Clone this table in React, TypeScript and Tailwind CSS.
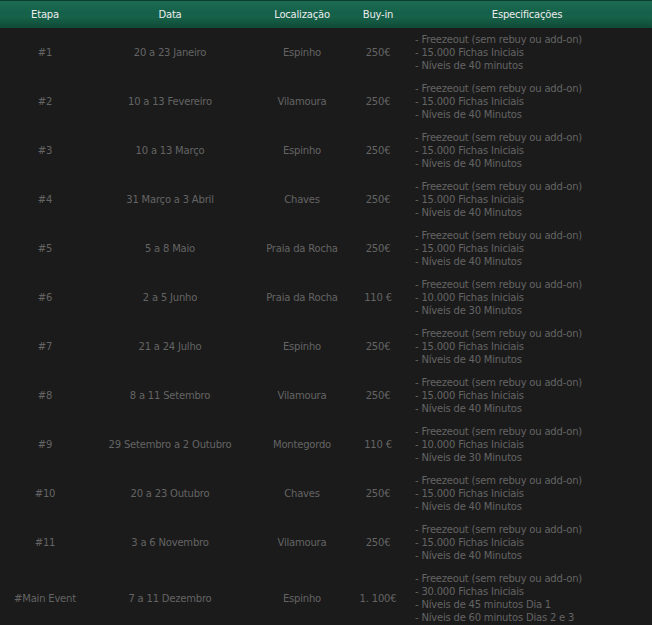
const ROWS = [
  { etapa: '#1', data: '20 a 23 Janeiro', local: 'Espinho', buyin: '250€', specs: ['- Freezeout (sem rebuy ou add-on)', '- 15.000 Fichas Iniciais', '- Níveis de 40 minutos'] },
  { etapa: '#2', data: '10 a 13 Fevereiro', local: 'Vilamoura', buyin: '250€', specs: ['- Freezeout (sem rebuy ou add-on)', '- 15.000 Fichas Iniciais', '- Níveis de 40 Minutos'] },
  { etapa: '#3', data: '10 a 13 Março', local: 'Espinho', buyin: '250€', specs: ['- Freezeout (sem rebuy ou add-on)', '- 15.000 Fichas Iniciais', '- Níveis de 40 Minutos'] },
  { etapa: '#4', data: '31 Março a 3 Abril', local: 'Chaves', buyin: '250€', specs: ['- Freezeout (sem rebuy ou add-on)', '- 15.000 Fichas Iniciais', '- Níveis de 40 Minutos'] },
  { etapa: '#5', data: '5 a 8 Maio', local: 'Praia da Rocha', buyin: '250€', specs: ['- Freezeout (sem rebuy ou add-on)', '- 15.000 Fichas Iniciais', '- Níveis de 40 Minutos'] },
  { etapa: '#6', data: '2 a 5 Junho', local: 'Praia da Rocha', buyin: '110 €', specs: ['- Freezeout (sem rebuy ou add-on)', '- 10.000 Fichas Iniciais', '- Níveis de 30 Minutos'] },
  { etapa: '#7', data: '21 a 24 Julho', local: 'Espinho', buyin: '250€', specs: ['- Freezeout (sem rebuy ou add-on)', '- 15.000 Fichas Iniciais', '- Níveis de 40 Minutos'] },
  { etapa: '#8', data: '8 a 11 Setembro', local: 'Vilamoura', buyin: '250€', specs: ['- Freezeout (sem rebuy ou add-on)', '- 15.000 Fichas Iniciais', '- Níveis de 40 Minutos'] },
  { etapa: '#9', data: '29 Setembro a 2 Outubro', local: 'Montegordo', buyin: '110 €', specs: ['- Freezeout (sem rebuy ou add-on)', '- 10.000 Fichas Iniciais', '- Níveis de 30 Minutos'] },
  { etapa: '#10', data: '20 a 23 Outubro', local: 'Chaves', buyin: '250€', specs: ['- Freezeout (sem rebuy ou add-on)', '- 15.000 Fichas Iniciais', '- Níveis de 40 Minutos'] },
  { etapa: '#11', data: '3 a 6 Novembro', local: 'Vilamoura', buyin: '250€', specs: ['- Freezeout (sem rebuy ou add-on)', '- 15.000 Fichas Iniciais', '- Níveis de 40 Minutos'] },
  { etapa: '#Main Event', data: '7 a 11 Dezembro', local: 'Espinho', buyin: '1. 100€', specs: ['- Freezeout (sem rebuy ou add-on)', '- 30.000 Fichas Iniciais', '- Níveis de 45 minutos Dia 1', '- Níveis de 60 minutos Dias 2 e 3'] },
];

const GRID = 'grid grid-cols-[90px_160px_104px_48px_1fr]';

export default function App() {
  return (
    <div className="w-[652px] min-h-[625px] bg-[#1b1b1b] font-['DejaVu_Sans',sans-serif] text-[10px] tracking-[-0.2px]">
      {/* Header */}
      <div className={`${GRID} h-[28px] items-center border-t border-[#0e3d2e] bg-[linear-gradient(to_bottom,#1c6c52_0%,#15604a_45%,#176249_60%,#0f4a37_100%)] text-[#ececec]`}>
        <div className="text-center">Etapa</div>
        <div className="text-center">Data</div>
        <div className="text-center">Localização</div>
        <div className="text-center">Buy-in</div>
        <div className="text-center">Especificações</div>
      </div>

      {/* Rows */}
      {ROWS.map((row, idx) => (
        <div key={idx} className={`${GRID} items-center py-[5px] text-[#646464] leading-[13px]`}>
          <div className="text-center">{row.etapa}</div>
          <div className="text-center">{row.data}</div>
          <div className="text-center">{row.local}</div>
          <div className="text-center">{row.buyin}</div>
          <div className="pl-[13px]">
            {row.specs.map((s, i) => (
              <div key={i}>{s}</div>
            ))}
          </div>
        </div>
      ))}
    </div>
  );
}
